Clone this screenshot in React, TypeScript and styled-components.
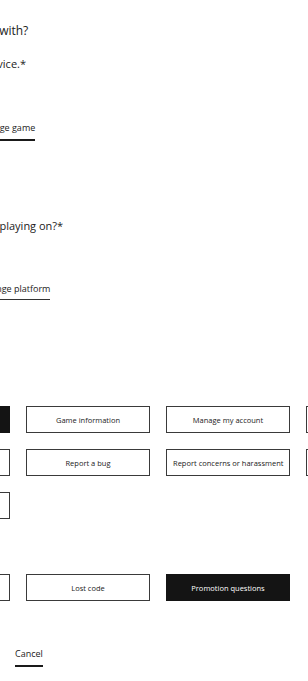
import styled, { createGlobalStyle, css } from 'styled-components'

const GlobalStyle = createGlobalStyle`
    html, body {
        margin: 0;
        padding: 0;
        background: #ffffff;
    }
    body {
        font-family: 'Open Sans', 'Noto Sans', sans-serif;
        color: #1f1f1f;
    }
`

const TEXT = '#222222'
const BORDER = '#3a3a3a'

const Page = styled.div`
    width: 308px;
    height: 681px;
    overflow: hidden;
`

// the form sits wider than the viewport, its left part is out of view
const Form = styled.form`
    margin-left: -114px;
    width: 560px;
    padding-top: 23px;
`

const Question = styled.h2`
    margin: 0;
    font-size: 12px;
    line-height: 16px;
    font-weight: 400;
    color: ${TEXT};
`

const Prompt = styled.p<{ $top: number }>`
    margin: ${(p) => p.$top}px 0 0 0;
    font-size: 11px;
    line-height: 15px;
    color: ${TEXT};
`

const SelectedRow = styled.div<{ $top: number }>`
    display: flex;
    align-items: flex-start;
    gap: 12px;
    margin-top: ${(p) => p.$top}px;
`

const SelectedName = styled.span<{ $width: number }>`
    width: ${(p) => p.$width}px;
    font-size: 9px;
    line-height: 14px;
    color: ${TEXT};
    white-space: nowrap;
    overflow: hidden;
`

const ChangeLink = styled.a<{ $thick?: boolean }>`
    font-size: 9px;
    line-height: 14px;
    color: ${TEXT};
    text-decoration: none;
    padding-bottom: ${(p) => (p.$thick ? 4 : 3)}px;
    border-bottom: ${(p) => (p.$thick ? '2px solid #1a1a1a' : '1px solid #333')};
    cursor: pointer;
`

const TopicGrid = styled.div<{ $top: number }>`
    display: grid;
    grid-template-columns: repeat(4, 124px);
    gap: 16px;
    margin-top: ${(p) => p.$top}px;
`

const TopicButton = styled.button<{ $selected?: boolean }>`
    height: 27px;
    padding: 0 6px;
    font-family: inherit;
    font-size: 7.5px;
    color: ${TEXT};
    background: #ffffff;
    border: 1px solid ${BORDER};
    cursor: pointer;
    white-space: nowrap;

    ${(p) =>
        p.$selected &&
        css`
            background: #141414;
            border-color: #141414;
            color: #ffffff;
        `}
`

const Actions = styled.div`
    display: flex;
    align-items: flex-start;
    gap: 16px;
    margin-top: 46px;
`

const SubmitButton = styled.button`
    width: 113px;
    height: 27px;
    font-family: inherit;
    font-size: 8px;
    background: #141414;
    color: #ffffff;
    border: none;
`

const CancelLink = styled.a`
    font-size: 9px;
    line-height: 14px;
    color: ${TEXT};
    padding-bottom: 4px;
    border-bottom: 2px solid #1a1a1a;
    cursor: pointer;
`

const categories = [
    { label: 'Technical support', selected: true },
    { label: 'Game information' },
    { label: 'Manage my account' },
    { label: 'Orders & payments' },
    { label: 'Gameplay' },
    { label: 'Report a bug' },
    { label: 'Report concerns or harassment' },
    { label: 'Account safety' },
    { label: 'Other' },
]

const topics = [
    { label: 'Code redemption' },
    { label: 'Lost code' },
    { label: 'Promotion questions', selected: true },
]

const App = () => {
    return (
        <>
            <GlobalStyle />
            <Page>
                <Form onSubmit={(e) => e.preventDefault()}>
                    <Question>What can I help you with?</Question>
                    <Prompt $top={17}>Choose a game or service.*</Prompt>

                    <SelectedRow $top={50}>
                        <SelectedName $width={80}>The Sims 4</SelectedName>
                        <ChangeLink $thick>Change game</ChangeLink>
                    </SelectedRow>

                    <Prompt $top={77}>What console are you playing on?*</Prompt>

                    <SelectedRow $top={49}>
                        <SelectedName $width={82}>PlayStation 5</SelectedName>
                        <ChangeLink>Change platform</ChangeLink>
                    </SelectedRow>

                    <TopicGrid $top={106}>
                        {categories.map((c) => (
                            <TopicButton type="button" key={c.label} $selected={c.selected}>
                                {c.label}
                            </TopicButton>
                        ))}
                    </TopicGrid>

                    <TopicGrid $top={55}>
                        {topics.map((t) => (
                            <TopicButton type="button" key={t.label} $selected={t.selected}>
                                {t.label}
                            </TopicButton>
                        ))}
                    </TopicGrid>

                    <Actions>
                        <SubmitButton type="submit">Next</SubmitButton>
                        <CancelLink>Cancel</CancelLink>
                    </Actions>
                </Form>
            </Page>
        </>
    )
}

export default App
